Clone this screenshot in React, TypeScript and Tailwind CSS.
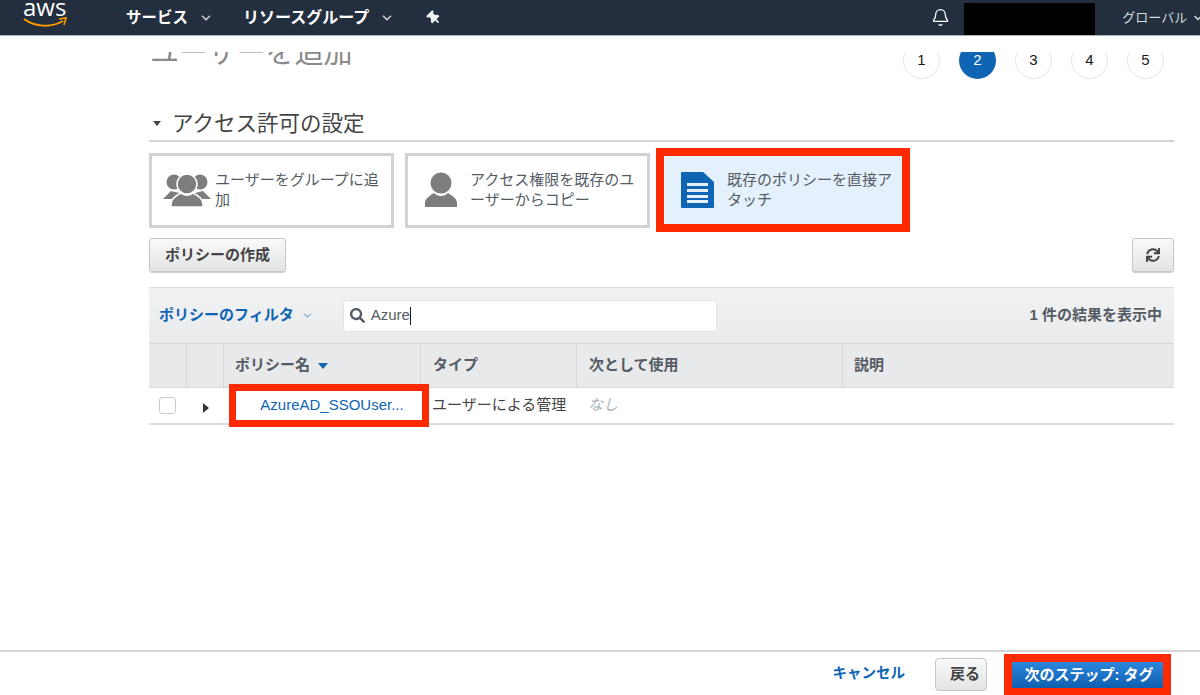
import { Bell, ChevronDown } from "lucide-react";
import { FaSearch, FaSync, FaThumbtack } from "react-icons/fa";

const steps = [1, 2, 3, 4, 5];

function GroupIcon() {
  return (
    <svg width="48" height="36" viewBox="0 0 48 36" className="shrink-0">
      <g fill="#7d7d7d">
        <circle cx="11" cy="10" r="7.5" />
        <circle cx="37" cy="10" r="7.5" />
        <path d="M0 27 L8 19 L16 21 V27 Z" />
        <path d="M48 27 L40 19 L32 21 V27 Z" />
      </g>
      <g fill="#7d7d7d" stroke="#fff" strokeWidth="1.5">
        <circle cx="24" cy="12" r="10" />
        <path d="M8 35 V32 C8 26 14 23 18 21 C21 24 27 24 30 21 C34 23 40 26 40 32 V35 Z" />
      </g>
    </svg>
  );
}

function PersonIcon() {
  return (
    <svg width="34" height="36" viewBox="0 0 34 36" className="shrink-0">
      <circle cx="17" cy="11" r="10.5" fill="#7d7d7d" />
      <path
        d="M1 35 V31 C1 26 7 23 10 21 C14 25 20 25 24 21 C27 23 33 26 33 31 V35 Z"
        fill="#7d7d7d"
      />
    </svg>
  );
}

function DocIcon() {
  return (
    <svg width="33" height="37" viewBox="0 0 33 37" className="shrink-0">
      <path
        d="M1 0 H22 L33 10 V35 Q33 36 32 36 H1 Q0 36 0 35 V1 Q0 0 1 0 Z"
        fill="#0f64b4"
      />
      <g fill="#e4f0fb">
        <rect x="6" y="11" width="21" height="3" />
        <rect x="6" y="17" width="21" height="3" />
        <rect x="6" y="23" width="21" height="3" />
        <rect x="6" y="28" width="21" height="3" />
      </g>
    </svg>
  );
}

function AwsLogo() {
  return (
    <div className="relative shrink-0 w-[44px] h-[35px] overflow-hidden">
      <span className="absolute left-0 top-[-7px] text-[24px] leading-[28px] text-white font-['Open_Sans',sans-serif]">
        aws
      </span>
      <svg width="44" height="12" viewBox="0 0 44 12" className="absolute left-0 top-[17px]">
        <path d="M1 2 C12 10 28 11 40 4" fill="none" stroke="#f90" strokeWidth="2" />
        <path d="M36 2 L43 1 L41 8" fill="none" stroke="#f90" strokeWidth="1.6" />
      </svg>
    </div>
  );
}

function Card({ label, icon, pad }: { label: string; icon: React.ReactNode; pad: string }) {
  return (
    <div className={`flex items-center h-[75px] w-[245px] border-[3px] border-[#d2d2d2] bg-white ${pad}`}>
      {icon}
      <div className="text-[15px] leading-[20px] text-[#545b64]">{label}</div>
    </div>
  );
}

export default function App() {
  return (
    <div className="flex flex-col h-[695px] w-[1200px] overflow-hidden bg-white font-['Liberation_Sans','Noto_Sans_CJK_JP',sans-serif]">
      {/* Top nav */}
      <header className="flex items-center h-[36px] shrink-0 overflow-hidden bg-[#232f3e] border-b border-[#aab7b8] pl-[23px] text-white">
        <AwsLogo />
        <span className="ml-[59px] shrink-0 whitespace-nowrap text-[15.5px] font-bold">サービス</span>
        <ChevronDown size={14} strokeWidth={3} className="ml-[11px] shrink-0 text-[#c5c9cc]" />
        <span className="ml-[30px] shrink-0 whitespace-nowrap text-[16px] font-bold">リソースグループ</span>
        <ChevronDown size={14} strokeWidth={3} className="ml-[11px] shrink-0 text-[#c5c9cc]" />
        <FaThumbtack size={14} className="ml-[33px] shrink-0 -rotate-45 text-[#f2f3f3]" />
        <Bell size={19} strokeWidth={1.6} className="ml-[490px] shrink-0 text-white" />
        <div className="ml-[14px] mt-[3px] h-[32px] w-[131px] shrink-0 bg-black" />
        <span className="ml-[27px] shrink-0 text-[13px] whitespace-nowrap text-[#d5dbdb]">グローバル</span>
        <ChevronDown size={12} strokeWidth={3} className="ml-[5px] shrink-0 text-[#d5dbdb]" />
      </header>

      {/* Scrolled wizard content */}
      <main className="flex-1 min-h-0 mt-[16px] overflow-hidden pl-[149px] pr-[26px]">
        <div className="flex items-center justify-between h-[37px] -mt-[10px]">
          <h1 className="text-[29px] leading-[37px] text-[#8a8a8a] -mt-[14px] ml-[1px]">ユーザーを追加</h1>
          <div className="flex gap-[19px] mr-[10px]">
            {steps.map((n) => (
              <div
                key={n}
                className={
                  n === 2
                    ? "flex items-center justify-center w-[37px] h-[37px] rounded-full bg-[#0f64b4] text-white text-[15px]"
                    : "flex items-center justify-center w-[37px] h-[37px] rounded-full border border-[#e5e5e5] bg-white text-[#16191f] text-[15px]"
                }
              >
                {n}
              </div>
            ))}
          </div>
        </div>

        <div className="flex items-center gap-[11px] h-[33px] mt-[30px] border-b-2 border-[#d5d5d5] pb-[2px]">
          <span className="ml-[4px] w-0 h-0 border-x-[4px] border-x-transparent border-t-[5px] border-t-[#444]" />
          <h2 className="text-[21.5px] leading-[30px] text-[#444]">アクセス許可の設定</h2>
        </div>

        <div className="flex items-center mt-[6px]">
          <Card label="ユーザーをグループに追加" icon={<GroupIcon />} pad="pl-[11px] pr-[10px] gap-[4px]" />
          <div className="w-[11px]" />
          <Card label="アクセス権限を既存のユーザーからコピー" icon={<PersonIcon />} pad="pl-[16px] pr-[10px] gap-[12px]" />
          <div className="w-[6px]" />
          <div className="flex items-center gap-[13px] h-[84px] w-[254px] border-[8px] border-[#ff2a00] bg-[#e4f0fb] pl-[17px] pr-[4px]">
            <DocIcon />
            <div className="text-[15px] leading-[20px] text-[#545b64]">既存のポリシーを直接アタッチ</div>
          </div>
        </div>

        <div className="flex items-center justify-between mt-[6px]">
          <button className="h-[34px] w-[137px] rounded-[3px] border border-[#c4c6c8] bg-gradient-to-b from-[#f9f9f9] to-[#e3e4e5] text-[15px] font-bold text-[#444] shadow-[0_1px_1px_rgba(0,0,0,0.2)]">
            ポリシーの作成
          </button>
          <button className="flex items-center justify-center h-[34px] w-[42px] rounded-[3px] border border-[#c4c6c8] bg-gradient-to-b from-[#f9f9f9] to-[#e3e4e5] text-[#444] shadow-[0_1px_1px_rgba(0,0,0,0.2)]">
            <FaSync size={14} />
          </button>
        </div>

        {/* Policy table */}
        <div className="mt-[15px]">
          <div className="flex items-center h-[56px] bg-gradient-to-b from-[#f1f2f2] to-[#eaebec] border-t border-[#dddddd] pl-[10px] pr-[12px]">
            <span className="text-[15px] font-bold text-[#0f64b4]">ポリシーのフィルタ</span>
            <ChevronDown size={13} strokeWidth={1.5} className="ml-[7px] text-[#0f64b4]" />
            <div className="flex items-center ml-[29px] h-[32px] w-[374px] rounded-[3px] border border-[#e1e3e4] bg-white pl-[6px]">
              <FaSearch size={15} className="text-[#545b64]" />
              <span className="ml-[6px] text-[15px] text-[#545b64]">Azure</span>
              <span className="w-px h-[18px] bg-[#16191f]" />
            </div>
            <span className="ml-auto text-[15px] font-bold text-[#545b64]">1 件の結果を表示中</span>
          </div>

          <div className="grid grid-cols-[38px_37px_197px_156px_266px_1fr] h-[45px] bg-[#e8e9ea] border-y border-[#d5d7d8] text-[15px] font-bold text-[#545b64]">
            <div className="border-r border-[#d5d7d8]" />
            <div className="border-r border-[#d5d7d8]" />
            <div className="flex items-center gap-[8px] pl-[11px] border-r border-[#d5d7d8]">
              ポリシー名
              <span className="w-0 h-0 border-x-[5px] border-x-transparent border-t-[6px] border-t-[#0f64b4]" />
            </div>
            <div className="flex items-center pl-[12px] border-r border-[#d5d7d8]">タイプ</div>
            <div className="flex items-center pl-[12px] border-r border-[#d5d7d8]">次として使用</div>
            <div className="flex items-center pl-[11px]">説明</div>
          </div>

          <div className="grid grid-cols-[38px_37px_197px_156px_266px_1fr] h-[37px] border-b-2 border-[#dcdcdc] text-[15px] text-[#444]">
            <div className="flex items-center pl-[10px]">
              <span className="w-[17px] h-[17px] rounded-[3px] border border-[#c9cbcc] bg-white" />
            </div>
            <div className="flex items-center pl-[16px]">
              <span className="w-0 h-0 mt-[4px] border-y-[5px] border-y-transparent border-l-[6px] border-l-[#333]" />
            </div>
            <div className="relative">
              {/* Annotation box drawn over the row */}
              <div className="absolute left-[5px] right-[-8px] top-[-4px] bottom-[-4px] flex items-center justify-center border-[7px] border-[#ff2a00] bg-white pl-[6px] text-[#0f64b4]">
                AzureAD_SSOUser...
              </div>
            </div>
            <div className="flex items-center pl-[11px] whitespace-nowrap">ユーザーによる管理</div>
            <div className="flex items-center pl-[11px] italic text-[#aab0b4]">なし</div>
            <div />
          </div>
        </div>
      </main>

      {/* Wizard footer */}
      <footer className="flex items-center justify-end h-[45px] shrink-0 border-t-2 border-[#d5d5d5] pr-[29px]">
        <span className="text-[14.5px] font-bold text-[#0f64b4]">キャンセル</span>
        <button className="ml-[30px] mt-[2px] h-[33px] w-[52px] rounded-[4px] border border-[#c4c6c8] bg-gradient-to-b from-[#f9f9f9] to-[#e3e4e5] pl-[8px] text-[15px] font-bold text-[#444]">
          戻る
        </button>
        <button className="self-end ml-[17px] h-[41px] w-[167px] border-[8px] border-b-[7px] border-[#ff2a00] bg-gradient-to-b from-[#2b86dc] to-[#0f5fb0] pl-[3px] text-[15px] leading-[20px] font-bold text-white whitespace-nowrap">
          次のステップ: タグ
        </button>
      </footer>
    </div>
  );
}
